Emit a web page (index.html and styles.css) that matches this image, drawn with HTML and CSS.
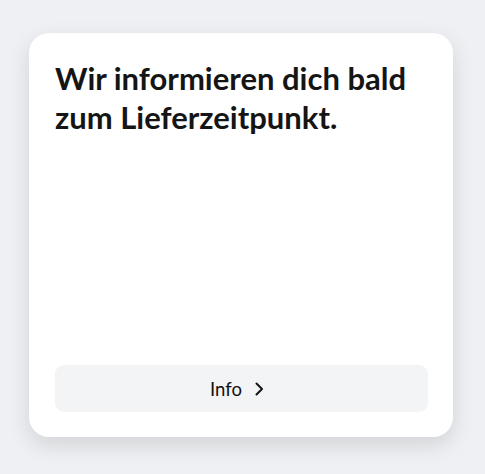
FILE: index.html
```html
<!DOCTYPE html>
<html lang="de">
<head>
<meta charset="utf-8">
<link rel="stylesheet" href="styles.css">
</head>
<body>
<div class="page">
  <div class="card">
    <h1 class="title">Wir informieren dich bald zum Lieferzeitpunkt.</h1>
    <button class="info-btn" type="button">
      <span class="info-label">Info</span>
      <svg class="chev" width="10" height="14" viewBox="0 0 10 14" aria-hidden="true">
        <path d="M2.5 1.5 L8 7 L2.5 12.5" fill="none" stroke="#151515" stroke-width="2" stroke-linecap="round" stroke-linejoin="round"/>
      </svg>
    </button>
  </div>
</div>
</body>
</html>
```
FILE: styles.css
```css
html, body {
  margin: 0;
  padding: 0;
}
body {
  background: #eff0f3;
  width: 485px;
  height: 474px;
  overflow: hidden;
  font-family: Lato, "Noto Sans", sans-serif;
  color: #151515;
}
.page {
  padding: 33px 32px 0 29px;
}
.card {
  box-sizing: border-box;
  width: 424px;
  height: 404px;
  background: #ffffff;
  border-radius: 20px;
  box-shadow: 0 8px 22px rgba(0, 0, 0, 0.12);
  padding: 26px 25px 25px 26px;
  display: flex;
  flex-direction: column;
  justify-content: space-between;
}
.title {
  margin: 0;
  font-size: 31px;
  line-height: 39px;
  font-weight: 700;
  letter-spacing: 0;
  color: #151515;
}
.info-btn {
  display: flex;
  align-items: center;
  justify-content: center;
  gap: 12px;
  height: 47px;
  width: 100%;
  border: none;
  border-radius: 9px;
  background: #f3f4f6;
  font-family: Lato, "Noto Sans", sans-serif;
  font-size: 18.5px;
  color: #111111;
  padding: 0 9px 0 0;
}
.chev {
  display: block;
}
```
